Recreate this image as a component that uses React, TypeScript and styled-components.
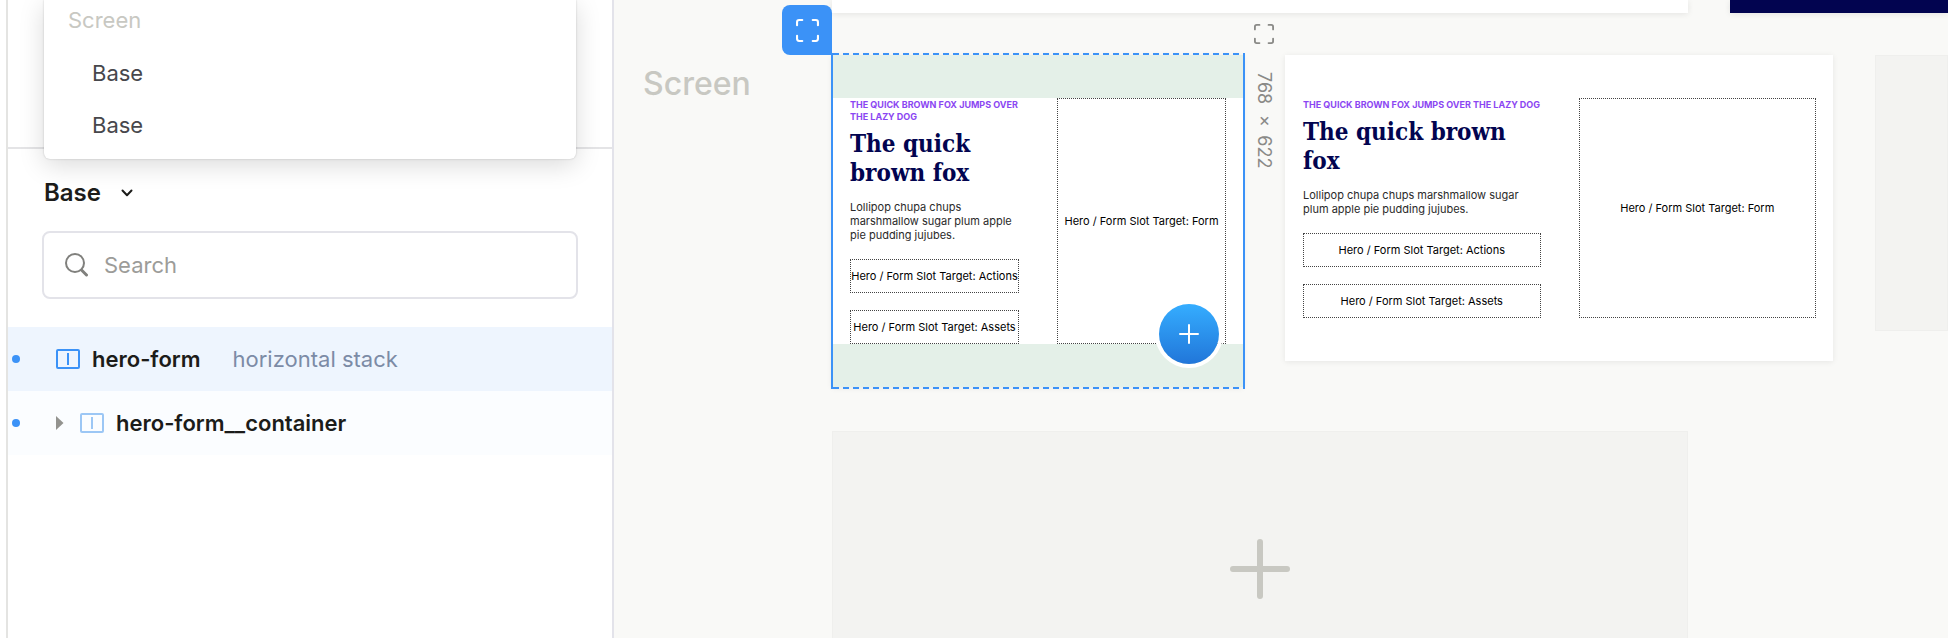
import React from "react";
import styled, { createGlobalStyle } from "styled-components";

const GlobalStyle = createGlobalStyle`
  *, *::before, *::after { box-sizing: border-box; }
  body { margin: 0; background: #fff; font-family: Inter, "Liberation Sans", sans-serif; }
  button, input, select { font: inherit; color: inherit; }
  h2, h3, p, ul { margin: 0; padding: 0; }
  ul { list-style: none; }
`;

const Shell = styled.div`
  display: flex;
  height: 100vh;
  padding-left: 6px;
  overflow: hidden;
`;

/* ---------- sidebar ---------- */

const Sidebar = styled.aside`
  flex: 0 0 608px;
  display: flex;
  flex-direction: column;
  background: #fff;
  border-left: 2px solid #e4e4e2;
  border-right: 2px solid #e3e3ea;
  font-size: 22px;
  line-height: 28px;
`;

const TopSection = styled.section`
  position: relative;
  flex: 0 0 149px;
  border-bottom: 2px solid #e4e4e6;
`;

const Menu = styled.ul`
  position: absolute;
  z-index: 2;
  top: 0;
  left: 36px;
  right: 36px;
  padding: 0 24px 8px;
  background: #fff;
  border-radius: 0 0 6px 6px;
  box-shadow: 0 0 2px rgba(0, 0, 0, 0.22), 0 6px 26px rgba(0, 0, 0, 0.15);
`;

const MenuHeading = styled.li`
  padding: 6px 0 13px;
  color: #c8c8c2;
`;

const MenuButton = styled.button`
  display: block;
  width: 100%;
  padding: 12px 24px;
  border: 0;
  background: none;
  color: #47474c;
  text-align: left;
`;

const Controls = styled.section`
  display: flex;
  flex-direction: column;
  align-items: flex-start;
  gap: 23px;
  padding: 29px 34px 28px;
`;

const StateField = styled.label`
  position: relative;
  display: flex;
  align-items: center;
  padding-left: 2px;
  svg { position: absolute; right: 0; pointer-events: none; }
`;

const StateSelect = styled.select`
  appearance: none;
  padding: 0 32px 0 0;
  border: 0;
  background: none;
  color: #1c1c1a;
  font-size: 24px;
  font-weight: 600;
  line-height: 30px;
`;

const SearchField = styled.label`
  display: flex;
  align-items: center;
  gap: 15px;
  width: 100%;
  padding: 18px 20px;
  border: 2px solid #e3e3e9;
  border-radius: 8px;
`;

const SearchInput = styled.input`
  flex: 1;
  min-width: 0;
  padding: 0;
  border: 0;
  outline: 0;
  background: none;
  &::placeholder { color: #9c9c99; opacity: 1; }
`;

const LayerRow = styled.li<{ $selected?: boolean }>`
  display: flex;
  align-items: center;
  height: 64px;
  padding-left: 4px;
  color: #1c1c1a;
  background: ${(p) => (p.$selected ? "#eef5fe" : "#fbfdff")};
`;

const Dot = styled.span`
  width: 8px;
  height: 8px;
  margin-right: 36px;
  border-radius: 50%;
  background: #3b92f7;
`;

const Toggle = styled.button`
  display: flex;
  width: 24px;
  padding: 0;
  border: 0;
  background: none;
`;

const LayerName = styled.strong`
  margin: 0 32px 0 12px;
  font-weight: 600;
`;

const LayerKind = styled.span`
  color: #7c8ba6;
`;

/* ---------- canvas ---------- */

const Canvas = styled.main`
  flex: 1;
  min-width: 0;
  display: flex;
  flex-direction: column;
  background: #f9f9f7;
  overflow: hidden;
`;

const Lane = styled.section<{ $space: number }>`
  flex: none;
  display: grid;
  grid-template-columns: 218px 1fr;
  margin-bottom: ${(p) => p.$space}px;
`;

const Track = styled.div`
  grid-column: 2;
  display: flex;
  align-items: flex-start;
  gap: 42px;
`;

const Sheet = styled.div<{ $navy?: boolean }>`
  flex: ${(p) => (p.$navy ? "1" : "0 0 856px")};
  height: 13px;
  background: ${(p) => (p.$navy ? "#020450" : "#fff")};
  box-shadow: 0 1px 6px rgba(0, 0, 0, 0.09);
`;

const LaneTitle = styled.h2`
  padding: 10px 0 0 29px;
  color: #c8c8c2;
  font-size: 32px;
  font-weight: 500;
  line-height: 38px;
`;

const Artboard = styled.article<{ $width: number; $selected?: boolean }>`
  position: relative;
  flex: 0 0 ${(p) => p.$width}px;
  display: flex;
  gap: 38px;
  padding: 0 17px 0 18px;
  border-style: solid;
  border-width: 43px 0;
  border-color: ${(p) => (p.$selected ? "#e4f0e8" : "#fff")};
  background: #fff;
  box-shadow: 0 1px 6px rgba(0, 0, 0, 0.08);
`;

const Column = styled.div`
  flex: 1 1 0;
  min-width: 0;
`;

const Eyebrow = styled.p`
  margin-right: -8px;
  padding-top: 1px;
  color: #8b46f2;
  font-size: 9px;
  font-weight: 700;
  line-height: 12px;
  text-transform: uppercase;
`;

const Headline = styled.h3`
  margin: 6px 0 13px;
  color: #020450;
  font-family: "DejaVu Serif Condensed", "DejaVu Serif", serif;
  font-size: 24px;
  font-weight: 700;
  line-height: 29px;
`;

const Copy = styled.p`
  color: #2a2a2a;
  font-size: 11px;
  line-height: 14px;
`;

const Slot = styled.div<{ $fill?: boolean }>`
  display: flex;
  align-items: center;
  justify-content: center;
  height: ${(p) => (p.$fill ? "100%" : "34px")};
  margin-top: ${(p) => (p.$fill ? 0 : 17)}px;
  border: 1px dotted #444;
  color: #000;
  font-size: 11px;
  line-height: 14px;
  white-space: nowrap;
`;

const Selection = styled.div`
  position: absolute;
  inset: -45px -2px -45px -1px;
  border: solid #3b92f7;
  border-width: 0 2px;
  pointer-events: none;
  &::before, &::after {
    content: "";
    position: absolute;
    left: 0;
    right: 0;
    height: 2px;
    background: repeating-linear-gradient(90deg, #3b92f7 0 6px, transparent 6px 10px);
  }
  &::before { top: 0; }
  &::after { bottom: 0; }
`;

const FocusButton = styled.button`
  position: absolute;
  right: 100%;
  bottom: 100%;
  display: flex;
  align-items: center;
  justify-content: center;
  width: 50px;
  height: 50px;
  margin-bottom: 43px;
  padding: 0;
  border: 0;
  border-radius: 8px 8px 0 8px;
  background: #3b92f7;
  color: #fff;
`;

const SizeTag = styled.div`
  position: absolute;
  top: -74px;
  left: 100%;
  display: flex;
  flex-direction: column;
  align-items: center;
  gap: 28px;
  width: 42px;
  color: #8a8a87;
  font-size: 18px;
  line-height: 24px;
`;

const BareButton = styled.button`
  display: flex;
  padding: 0;
  border: 0;
  background: none;
`;

const SizeText = styled.span`
  writing-mode: vertical-rl;
  white-space: nowrap;
`;

const AddButton = styled.button`
  position: absolute;
  right: 24px;
  bottom: -20px;
  display: flex;
  align-items: center;
  justify-content: center;
  width: 60px;
  height: 60px;
  padding: 0;
  border: 0;
  border-radius: 50%;
  background: linear-gradient(#35adff, #2176d9);
  box-shadow: 0 0 0 4px #fff;
`;

const EmptyBoard = styled.button<{ $width?: number }>`
  flex: ${(p) => (p.$width ? `0 0 ${p.$width}px` : "1")};
  display: flex;
  align-items: center;
  justify-content: center;
  height: 276px;
  padding: 0;
  border: 1px solid #efefed;
  background: #f3f3f1;
`;

/* ---------- icons ---------- */

const ExpandIcon = ({ size }: { size: number }) => (
  <svg width={size} height={size} viewBox="0 0 22 22" fill="none" stroke="currentColor" strokeWidth="2" strokeLinecap="round" strokeLinejoin="round">
    <path d="M1 6V3A2 2 0 0 1 3 1H6M16 1H19A2 2 0 0 1 21 3V6M21 16V19A2 2 0 0 1 19 21H16M6 21H3A2 2 0 0 1 1 19V16" />
  </svg>
);

const StackIcon = ({ color }: { color: string }) => (
  <svg width="24" height="20" viewBox="0 0 24 20" fill="none" stroke={color} strokeWidth="2">
    <rect x="1" y="1" width="22" height="18" rx="1" />
    <path d="M12 4v12" />
  </svg>
);

const PlusIcon = ({ size, weight, color }: { size: number; weight: number; color: string }) => (
  <svg width={size} height={size} viewBox={`0 0 ${size} ${size}`} stroke={color} strokeWidth={weight} strokeLinecap="round">
    <path d={`M${size / 2} ${weight / 2}V${size - weight / 2}M${weight / 2} ${size / 2}H${size - weight / 2}`} />
  </svg>
);

/* ---------- content ---------- */

const phrase = "The quick brown fox";

const HeroContent = () => (
  <>
    <Column>
      <Eyebrow>{`${phrase} jumps over the lazy dog`}</Eyebrow>
      <Headline>{phrase}</Headline>
      <Copy>Lollipop chupa chups marshmallow sugar plum apple pie pudding jujubes.</Copy>
      <Slot>Hero / Form Slot Target: Actions</Slot>
      <Slot>Hero / Form Slot Target: Assets</Slot>
    </Column>
    <Column>
      <Slot $fill>Hero / Form Slot Target: Form</Slot>
    </Column>
  </>
);

export default function App() {
  return (
    <Shell>
      <GlobalStyle />
      <Sidebar>
        <TopSection>
          <Menu>
            <MenuHeading>Screen</MenuHeading>
            <li><MenuButton type="button">Base</MenuButton></li>
            <li><MenuButton type="button">Base</MenuButton></li>
          </Menu>
        </TopSection>
        <Controls>
          <StateField>
            <StateSelect aria-label="State">
              <option>Base</option>
            </StateSelect>
            <svg width="12" height="8" viewBox="0 0 12 8" fill="none" stroke="#1c1c1a" strokeWidth="2" strokeLinecap="round" strokeLinejoin="round">
              <path d="M1.5 1.5L6 6.2L10.5 1.5" />
            </svg>
          </StateField>
          <SearchField>
            <svg width="25" height="24" viewBox="0 0 25 24" fill="none" stroke="#80807d" strokeLinecap="round">
              <circle cx="11" cy="10" r="9" strokeWidth="2" />
              <path d="M17.5 17l5 5" strokeWidth="3" />
            </svg>
            <SearchInput type="search" aria-label="Search" placeholder="Search" />
          </SearchField>
        </Controls>
        <ul>
          <LayerRow $selected>
            <Dot />
            <StackIcon color="#3b92f7" />
            <LayerName>hero-form</LayerName>
            <LayerKind>horizontal stack</LayerKind>
          </LayerRow>
          <LayerRow>
            <Dot />
            <Toggle type="button" aria-label="Expand">
              <svg width="8" height="14" viewBox="0 0 8 14"><path d="M0 0l7.5 7L0 14z" fill="#93938f" /></svg>
            </Toggle>
            <StackIcon color="#9cc7f5" />
            <LayerName>hero-form__container</LayerName>
          </LayerRow>
        </ul>
      </Sidebar>

      <Canvas>
        <Lane $space={42}>
          <Track>
            <Sheet />
            <Sheet $navy />
          </Track>
        </Lane>
        <Lane $space={44}>
          <LaneTitle>Screen</LaneTitle>
          <Track>
            <Artboard $width={411} $selected>
              <HeroContent />
              <Selection />
              <FocusButton type="button" aria-label="Focus artboard"><ExpandIcon size={23} /></FocusButton>
              <SizeTag>
                <BareButton type="button" aria-label="Focus size"><ExpandIcon size={20} /></BareButton>
                <SizeText>768 × 622</SizeText>
              </SizeTag>
              <AddButton type="button" aria-label="Add"><PlusIcon size={20} weight={2} color="#fff" /></AddButton>
            </Artboard>
            <Artboard $width={548}>
              <HeroContent />
            </Artboard>
            <EmptyBoard type="button" aria-label="Add artboard" />
          </Track>
        </Lane>
        <Lane $space={0}>
          <Track>
            <EmptyBoard type="button" aria-label="Add breakpoint" $width={856}>
              <PlusIcon size={60} weight={6} color="#c8c8c2" />
            </EmptyBoard>
          </Track>
        </Lane>
      </Canvas>
    </Shell>
  );
}
